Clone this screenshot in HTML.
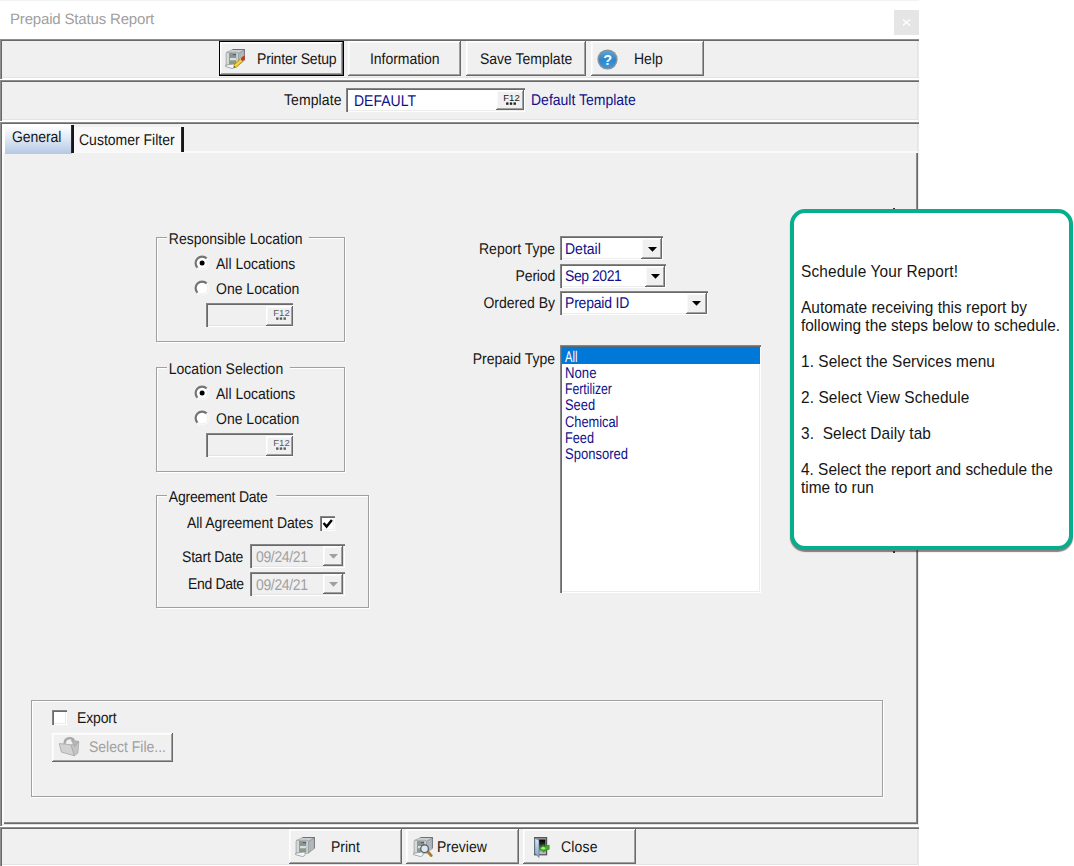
<!DOCTYPE html>
<html>
<head>
<meta charset="utf-8">
<title>Prepaid Status Report</title>
<style>
html,body{margin:0;padding:0;}
body{width:1074px;height:866px;overflow:hidden;background:#fff;position:relative;
  font-family:"Liberation Sans",sans-serif;font-size:14px;line-height:16px;color:#161616;}
div,span,svg{position:absolute;box-sizing:border-box;}
.t{white-space:pre;line-height:16px;height:16px;font-size:15.5px;transform:translateY(0.7px) scaleX(0.903);transform-origin:0 0;text-rendering:geometricPrecision;}
.r{text-align:right;transform-origin:100% 0;}
.navy{color:#10108a;}
.gray{color:#a0a0a0;}
.panel{background:#f0f0f0;box-shadow:inset 1px 1px 0 #8e8e8e,inset 2px 2px 0 #696969,inset -1px 0 0 #ececec,inset 0 -1px 0 #fff,inset -2px -2px 0 #e3e3e3;}
.btn{background:#f0f0f0;box-shadow:inset -1px -1px 0 #696969,inset 1px 1px 0 #fff,inset -2px -2px 0 #a0a0a0,inset 2px 2px 0 #f9f9f9;}
.btnd{background:#f0f0f0;box-shadow:inset 0 0 0 1px #000,inset -2px -2px 0 #696969,inset 2px 2px 0 #fff,inset -3px -3px 0 #a0a0a0,inset 3px 3px 0 #f9f9f9;}
.sunk{background:#fff;box-shadow:inset 1px 1px 0 #858585,inset 2px 2px 0 #696969,inset -1px -1px 0 #fff,inset -2px -2px 0 #ececec;}
.sunkd{background:#f0f0f0;box-shadow:inset 1px 1px 0 #858585,inset 2px 2px 0 #696969,inset -1px -1px 0 #fff,inset -2px -2px 0 #e3e3e3;}
.gb{border:1px solid #a0a0a0;box-shadow:1px 1px 0 #fff,inset 1px 1px 0 #fff;}
.gbt{background:#f0f0f0;padding:0 7px 0 2px;}
.li{left:3px;width:197px;height:16px;line-height:17px;font-size:13.6px;letter-spacing:-0.3px;color:#000080;padding-left:2px;white-space:pre;}
</style>
</head>
<body>

<svg width="0" height="0" style="left:0;top:0;">
<defs>
<linearGradient id="hg" x1="0" y1="0" x2="0" y2="1"><stop offset="0" stop-color="#5aa3dc"/><stop offset="0.5" stop-color="#2f86cc"/><stop offset="1" stop-color="#3a98e0"/></linearGradient>
<linearGradient id="dg" x1="0" y1="0" x2="0" y2="1"><stop offset="0" stop-color="#d6ebff"/><stop offset="1" stop-color="#84a4c0"/></linearGradient>
<linearGradient id="ig" x1="0" y1="0" x2="0" y2="1"><stop offset="0" stop-color="#000"/><stop offset="0.3" stop-color="#222"/><stop offset="1" stop-color="#cfcfcf"/></linearGradient>
<symbol id="prn" viewBox="0 0 20 20">
 <polygon points="1.3,3.4 7.6,0.5 19.7,0.7 13.4,4.5" fill="#cdd1d3" stroke="#8d9398" stroke-width="0.5"/>
 <polygon points="7.4,0.1 19.9,0.1 19.9,1 7.6,0.9" fill="#6c7176"/>
 <polygon points="13.2,4.5 19.9,0.8 19.9,11 13.2,16.4" fill="#a9aeb2" stroke="#7d8388" stroke-width="0.5"/>
 <polygon points="19.3,0.8 19.9,0.8 19.9,11 19.3,11.5" fill="#5f6469"/>
 <path d="M14.8 4.2V14.8M16.3 3.4V13.6M17.8 2.6V12.4" stroke="#c3c7ca" stroke-width="0.5"/>
 <rect x="1.1" y="3.3" width="12.2" height="13" rx="1.3" fill="#d6d9db" stroke="#8f959a" stroke-width="0.7"/>
 <rect x="4.3" y="4.6" width="6.7" height="10.2" fill="#8c9690" stroke="#7b847f" stroke-width="0.4"/>
 <rect x="5" y="4.2" width="2.6" height="0.9" fill="#6ab04c"/>
 <rect x="7.9" y="5.2" width="3.2" height="0.9" fill="#3e5468"/>
 <rect x="5" y="9" width="5.9" height="2.3" fill="#dcdede"/>
 <rect x="4.6" y="12.5" width="6" height="1.6" fill="#86a083"/>
 <polygon points="0.2,16.3 9.9,14.9 10.2,17.8 7.9,19.7 0.5,17.6" fill="#f5f6f8" stroke="#7f8994" stroke-width="0.7"/>
</symbol>
<symbol id="rad" viewBox="0 0 16 16">
 <circle cx="8" cy="8" r="7.3" fill="#fff"/>
 <path d="M12.7 3.5 A6.4 6.4 0 0 0 3.5 12.7" fill="none" stroke="#747474" stroke-width="2.2"/>
 <path d="M12.3 3.7 A6 6 0 0 1 3.7 12.3" fill="none" stroke="#e9e9e9" stroke-width="1"/>
</symbol>
<symbol id="arr" viewBox="0 0 9 5"><polygon points="0,0 9,0 4.5,4.8"/></symbol>
<symbol id="f12" viewBox="0 0 27 20">
 <text x="7.2" y="9.7" font-family="Liberation Sans, sans-serif" font-size="9.6">F12</text>
 <rect x="10.1" y="11.4" width="2.4" height="2.4"/><rect x="13.8" y="11.4" width="2.4" height="2.4"/><rect x="17.5" y="11.4" width="2.4" height="2.4"/>
</symbol>
</defs>
</svg>
<!-- title bar -->
<div style="left:0;top:0;width:919px;height:1px;background:#f3f3f3;"></div>
<span class="t" style="left:10px;top:12px;font-size:15px;letter-spacing:-0.17px;color:#a0a0a0;transform:none;">Prepaid Status Report</span>
<div style="left:894px;top:10px;width:25px;height:25px;background:#e5e5e5;"></div>
<svg style="left:902px;top:18px;" width="9" height="9" viewBox="0 0 9 9"><path d="M1 1.5 L8 7.5 M8 1.5 L1 7.5" stroke="#fff" stroke-width="1.3" fill="none"/></svg>

<!-- panel 1: toolbar -->
<div class="panel" style="left:0;top:39px;width:919px;height:40px;"></div>
<div class="btnd" style="left:219px;top:41px;width:125px;height:35px;"></div>
<span class="t" style="left:256.6px;top:51px;letter-spacing:-0.2px;">Printer Setup</span>
<div class="btn" style="left:348px;top:41px;width:113px;height:35px;"></div>
<span class="t" style="left:370.4px;top:51px;letter-spacing:-0.05px;">Information</span>
<div class="btn" style="left:466px;top:41px;width:120px;height:35px;"></div>
<span class="t" style="left:480px;top:51px;">Save Template</span>
<div class="btn" style="left:591px;top:41px;width:113px;height:35px;"></div>
<span class="t" style="left:634px;top:51px;">Help</span>

<!-- panel 2: template -->
<div class="panel" style="left:0;top:80px;width:919px;height:41px;"></div>
<span class="t" style="left:283.5px;top:92px;letter-spacing:0.1px;">Template</span>
<div class="sunk" style="left:346px;top:88px;width:179px;height:24px;"></div>
<span class="t navy" style="left:354px;top:93px;">DEFAULT</span>
<div class="btn" style="left:496px;top:90px;width:28px;height:20px;"></div>
<span class="t navy" style="left:531px;top:92px;">Default Template</span>

<!-- panel 3: main -->
<div class="panel" style="left:0;top:122px;width:919px;height:704px;"></div>
<!-- tab page -->
<div style="left:2px;top:151px;width:916px;height:673px;background:#f0f0f0;box-shadow:inset 1px 1px 0 #fafafa,inset 2px 2px 0 #fafafa,inset -1px -1px 0 #696969,inset -2px -2px 0 #8e8e8e;"></div>
<!-- tabs -->
<div style="left:2px;top:124px;width:3px;height:28px;background:#fff;"></div>
<div style="left:5px;top:124px;width:67px;height:30px;background:linear-gradient(to bottom,#ffffff 0%,#ffffff 6%,#e4ecf6 42%,#b4c8e4 100%);"></div>
<div style="left:71px;top:125px;width:3px;height:28px;background:linear-gradient(to right,#3a3a3a,#161616 40%,#161616);"></div>
<span class="t" style="left:12.4px;top:129px;letter-spacing:-0.1px;">General</span>
<div style="left:74px;top:127px;width:107px;height:25px;background:#f8f8f8;"></div>
<div style="left:181px;top:127px;width:3px;height:25px;background:linear-gradient(to right,#3a3a3a,#161616 40%,#161616);"></div>
<span class="t" style="left:79px;top:132px;">Customer Filter</span>

<!-- group 1 -->
<div class="gb" style="left:156px;top:237px;width:189px;height:105px;"></div>
<span class="t gbt" style="left:167px;top:231px;">Responsible Location</span>
<span class="t" style="left:216px;top:256px;">All Locations</span>
<span class="t" style="left:216px;top:281px;">One Location</span>
<div class="sunkd" style="left:206px;top:303px;width:87px;height:24px;"></div>
<div class="btn" style="left:266px;top:306px;width:27px;height:20px;"></div>

<!-- group 2 -->
<div class="gb" style="left:156px;top:367px;width:189px;height:105px;"></div>
<span class="t gbt" style="left:167px;top:361px;">Location Selection</span>
<span class="t" style="left:216px;top:386px;">All Locations</span>
<span class="t" style="left:216px;top:411px;">One Location</span>
<div class="sunkd" style="left:206px;top:433px;width:87px;height:24px;"></div>
<div class="btn" style="left:266px;top:436px;width:27px;height:20px;"></div>

<!-- group 3 -->
<div class="gb" style="left:156px;top:495px;width:213px;height:113px;"></div>
<span class="t gbt" style="left:166.7px;top:489px;letter-spacing:-0.25px;padding-right:10px;">Agreement Date</span>
<span class="t" style="left:187px;top:515px;letter-spacing:-0.09px;">All Agreement Dates</span>
<div class="sunk" style="left:320px;top:516px;width:15px;height:15px;"></div>
<span class="t" style="left:182px;top:549px;letter-spacing:-0.2px;">Start Date</span>
<div class="sunkd" style="left:250px;top:544px;width:95px;height:24px;"></div>
<span class="t gray" style="left:256px;top:549px;letter-spacing:-0.39px;">09/24/21</span>
<div class="btn" style="left:323px;top:546px;width:20px;height:20px;"></div>
<span class="t" style="left:188px;top:576px;letter-spacing:-0.35px;">End Date</span>
<div class="sunkd" style="left:250px;top:572px;width:95px;height:24px;"></div>
<span class="t gray" style="left:256px;top:577px;letter-spacing:-0.39px;">09/24/21</span>
<div class="btn" style="left:323px;top:574px;width:20px;height:20px;"></div>

<!-- right column -->
<span class="t r" style="left:455px;width:100px;top:241px;">Report Type</span>
<div class="sunk" style="left:560px;top:236px;width:103px;height:24px;"></div>
<span class="t navy" style="left:565px;top:241px;">Detail</span>
<div class="btn" style="left:641px;top:238px;width:21px;height:21px;"></div>

<span class="t r" style="left:455px;width:100px;top:268px;letter-spacing:-0.2px;">Period</span>
<div class="sunk" style="left:560px;top:264px;width:106px;height:24px;"></div>
<span class="t navy" style="left:565px;top:268px;letter-spacing:-0.49px;">Sep 2021</span>
<div class="btn" style="left:645px;top:266px;width:20px;height:21px;"></div>

<span class="t r" style="left:455px;width:100px;top:295px;">Ordered By</span>
<div class="sunk" style="left:560px;top:291px;width:148px;height:24px;"></div>
<span class="t navy" style="left:565px;top:295px;letter-spacing:-0.22px;">Prepaid ID</span>
<div class="btn" style="left:686px;top:293px;width:21px;height:21px;"></div>

<span class="t r" style="left:455px;width:100px;top:351px;">Prepaid Type</span>
<div class="sunk" style="left:560px;top:345px;width:201px;height:248px;">
  <div style="left:2px;top:2px;width:198px;height:17px;background:#0078d7;"></div>
  <span class="t" style="left:5px;top:4px;color:#fff;transform:translateY(0.7px) scaleX(0.72);">All</span>
  <span class="t" style="left:5px;top:20px;color:#10108a;transform:translateY(0.7px) scaleX(0.85);">None</span>
  <span class="t" style="left:5px;top:36px;color:#10108a;transform:translateY(0.7px) scaleX(0.79);">Fertilizer</span>
  <span class="t" style="left:5px;top:52px;color:#10108a;transform:translateY(0.7px) scaleX(0.83);">Seed</span>
  <span class="t" style="left:5px;top:69px;color:#10108a;transform:translateY(0.7px) scaleX(0.827);">Chemical</span>
  <span class="t" style="left:5px;top:85px;color:#10108a;transform:translateY(0.7px) scaleX(0.82);">Feed</span>
  <span class="t" style="left:5px;top:101px;color:#10108a;transform:translateY(0.7px) scaleX(0.84);">Sponsored</span>
</div>

<!-- export frame -->
<div class="gb" style="left:31px;top:700px;width:852px;height:97px;"></div>
<div class="sunk" style="left:52px;top:710px;width:15px;height:15px;"></div>
<span class="t" style="left:77px;top:710px;letter-spacing:-0.18px;">Export</span>
<div class="btn" style="left:52px;top:733px;width:121px;height:29px;"></div>
<span class="t gray" style="left:89px;top:739px;">Select File...</span>

<!-- panel 4: bottom bar -->
<div class="panel" style="left:0;top:827px;width:919px;height:39px;"></div>
<div class="btn" style="left:289px;top:829px;width:113px;height:35px;"></div>
<span class="t" style="left:331px;top:839px;">Print</span>
<div class="btn" style="left:406px;top:829px;width:113px;height:35px;"></div>
<span class="t" style="left:437px;top:839px;">Preview</span>
<div class="btn" style="left:523px;top:829px;width:113px;height:35px;"></div>
<span class="t" style="left:560.8px;top:839px;letter-spacing:0.2px;">Close</span>


<!-- icons -->
<svg style="left:225px;top:49px;" width="20" height="20" viewBox="0 0 20 20"><use href="#prn"/>
 <line x1="9.8" y1="17.4" x2="16.6" y2="11" stroke="#b08c14" stroke-width="4"/>
 <line x1="9.8" y1="17.4" x2="16.6" y2="11" stroke="#f0d63a" stroke-width="2.6"/>
 <polygon points="8.3,19.1 8.9,16.2 11.2,18.4" fill="#8a6a14"/>
 <line x1="16.4" y1="11.2" x2="17.6" y2="10" stroke="#e6e6e6" stroke-width="3.6"/>
 <line x1="17.6" y1="10" x2="18.8" y2="8.9" stroke="#c23a2a" stroke-width="3.6" stroke-linecap="round"/>
</svg>
<svg style="left:597px;top:48.5px;" width="21" height="21" viewBox="0 0 21 21">
 <circle cx="10.5" cy="10.5" r="10.1" fill="#8a9399"/><circle cx="10.5" cy="10.5" r="8.7" fill="url(#hg)"/>
 <text x="10.6" y="16" text-anchor="middle" font-family="Liberation Sans, sans-serif" font-weight="bold" font-size="14.5" fill="#fff">?</text>
</svg>
<svg style="left:496.2px;top:91.3px;" width="27" height="20" fill="#222"><use href="#f12"/></svg>
<svg style="left:265.6px;top:306px;" width="27" height="20" fill="#5c5c5c"><use href="#f12"/></svg>
<svg style="left:265.6px;top:436px;" width="27" height="20" fill="#5c5c5c"><use href="#f12"/></svg>
<svg style="left:194.2px;top:254.8px;" width="16" height="16"><use href="#rad"/><circle cx="8.1" cy="8.1" r="2.5"/></svg>
<svg style="left:194.2px;top:279.9px;" width="16" height="16"><use href="#rad"/></svg>
<svg style="left:194.2px;top:384.8px;" width="16" height="16"><use href="#rad"/><circle cx="8.1" cy="8.1" r="2.5"/></svg>
<svg style="left:194.2px;top:409.9px;" width="16" height="16"><use href="#rad"/></svg>
<svg style="left:320px;top:516px;" width="15" height="15" viewBox="0 0 15 15"><path d="M3.6 7 L6.6 10.6 L11.9 3.9" fill="none" stroke="#000" stroke-width="2.4"/></svg>
<svg style="left:647.5px;top:247px;" width="9" height="5" fill="#000"><use href="#arr"/></svg>
<svg style="left:651.3px;top:274.3px;" width="9" height="5" fill="#000"><use href="#arr"/></svg>
<svg style="left:692.3px;top:301px;" width="9" height="5" fill="#000"><use href="#arr"/></svg>
<svg style="left:328.7px;top:554.3px;" width="9" height="5" fill="#a0a0a0"><use href="#arr"/></svg>
<svg style="left:328.7px;top:582px;" width="9" height="5" fill="#a0a0a0"><use href="#arr"/></svg>
<svg style="left:295px;top:837px;" width="20" height="20"><use href="#prn"/></svg>
<svg style="left:412.5px;top:837px;" width="20" height="20" viewBox="0 0 20 20"><use href="#prn"/>
 <line x1="14.5" y1="14.6" x2="18.2" y2="18.4" stroke="#a67c2e" stroke-width="2.8" stroke-linecap="round"/>
 <circle cx="11.6" cy="11.7" r="3.8" fill="#dce9f5" stroke="#55595d" stroke-width="1.2"/>
</svg>
<svg style="left:534.1px;top:836.5px;" width="17" height="21" viewBox="0 0 17 21">
 <rect x="0.6" y="0.6" width="12" height="17.2" fill="#9c9c9c" stroke="#55585b" stroke-width="1.2"/>
 <rect x="4.8" y="2.6" width="6.6" height="14" fill="url(#ig)"/>
 <polygon points="0.8,1.3 5,3.1 5,20.5 0.8,16.2" fill="url(#dg)" stroke="#5f6f7d" stroke-width="0.6"/>
 <polygon points="5.5,11.6 9.7,7.8 10,9.7 15.2,8.1 15.2,12.3 10.7,13.6 10,15.2" fill="#3cae1e" stroke="#2a8a12" stroke-width="0.6" stroke-linejoin="round"/>
 <ellipse cx="9.2" cy="11.3" rx="2" ry="1.2" fill="#9cf57c"/>
</svg>
<svg style="left:58.8px;top:736.8px;" width="21" height="20" viewBox="0 0 21 20">
 <polygon points="12,8 19.8,4.8 19,16 15.3,18.8" fill="#c4c4c4" stroke="#a0a0a0" stroke-width="0.6"/>
 <polygon points="0.3,6.5 12,7.8 15.3,18.8 2.4,15.1" fill="#d2d2d2" stroke="#a4a4a4" stroke-width="0.8"/>
 <path d="M5.8 6.9 C5 0.8 12.5 -0.6 15.2 3.6" fill="none" stroke="#a9a9a9" stroke-width="2.4"/>
 <polygon points="12.3,3.4 19.7,4.3 15.9,9.7" fill="#b6b6b6" stroke="#9c9c9c" stroke-width="0.6"/>
</svg>

<!-- callout -->
<div style="left:893px;top:208px;width:2px;height:1px;background:#333;"></div>
<div style="left:893px;top:551px;width:2px;height:2px;background:#333;"></div>
<div style="left:790px;top:209px;width:283px;height:341px;background:#fff;border:4px solid #06ae8d;border-radius:15px;box-shadow:0 2px 1px rgba(60,45,45,0.6);"></div>
<div style="left:801px;top:262.5px;width:300px;height:240px;font-size:17px;line-height:18px;white-space:pre;transform:scaleX(0.906);transform-origin:0 0;">
<div style="left:0;top:0px;height:18px;letter-spacing:0.155px;">Schedule Your Report!</div>
<div style="left:0;top:36px;height:18px;letter-spacing:0.03px;">Automate receiving this report by</div>
<div style="left:0;top:54px;height:18px;letter-spacing:0.015px;">following the steps below to schedule.</div>
<div style="left:0;top:90px;height:18px;letter-spacing:0.089px;">1. Select the Services menu</div>
<div style="left:0;top:126px;height:18px;letter-spacing:0.13px;">2. Select View Schedule</div>
<div style="left:0;top:162px;height:18px;letter-spacing:0.087px;">3.  Select Daily tab</div>
<div style="left:0;top:198px;height:18px;letter-spacing:0px;">4. Select the report and schedule the</div>
<div style="left:0;top:216px;height:18px;letter-spacing:0px;">time to run</div>
</div>
</body>
</html>
